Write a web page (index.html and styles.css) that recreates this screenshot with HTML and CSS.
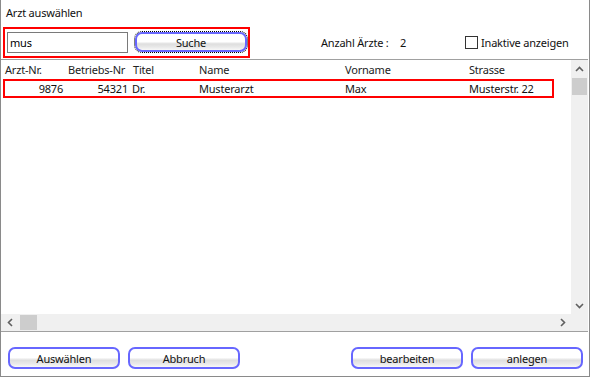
FILE: index.html
```html
<!DOCTYPE html>
<html lang="de">
<head>
    <meta charset="UTF-8">
    <title>Arzt auswählen</title>
    <link rel="stylesheet" href="styles.css">
</head>
<body>

    <div class="window">
        <div class="title">Arzt auswählen</div>

        <!-- Suche -->
        <div class="toolbar">
            <div class="search-box">
                <input class="search-input" type="text" value="mus">
                <button class="btn btn-focus search-btn">Suche</button>
            </div>
            <span class="count-label">Anzahl Ärzte :</span>
            <span class="count-value">2</span>
            <label class="inactive"><span class="check"></span>Inaktive anzeigen</label>
        </div>

        <!-- Liste -->
        <div class="list">
            <div class="list-body">
                <div class="list-head">
                    <span class="first">Arzt-Nr.</span>
                    <span>Betriebs-Nr</span>
                    <span>Titel</span>
                    <span>Name</span>
                    <span>Vorname</span>
                    <span>Strasse</span>
                </div>
                <div class="list-row selected">
                    <span class="num">9876</span>
                    <span class="num">54321</span>
                    <span>Dr.</span>
                    <span class="wide">Musterarzt</span>
                    <span class="wide">Max</span>
                    <span class="wide">Musterstr. 22</span>
                </div>
            </div>

            <div class="vscroll">
                <div class="arrow">
                    <svg width="9" height="6" viewBox="0 0 9 6"><polyline points="1,5 4.5,1.5 8,5" fill="none" stroke="#606060" stroke-width="1.6"/></svg>
                </div>
                <div class="thumb"></div>
                <div class="track"></div>
                <div class="arrow">
                    <svg width="9" height="6" viewBox="0 0 9 6"><polyline points="1,1 4.5,4.5 8,1" fill="none" stroke="#606060" stroke-width="1.6"/></svg>
                </div>
            </div>

            <div class="hscroll">
                <div class="arrow">
                    <svg width="6" height="9" viewBox="0 0 6 9"><polyline points="5,1 1.5,4.5 5,8" fill="none" stroke="#606060" stroke-width="1.6"/></svg>
                </div>
                <div class="thumb"></div>
                <div class="track"></div>
                <div class="arrow">
                    <svg width="6" height="9" viewBox="0 0 6 9"><polyline points="1,1 4.5,4.5 1,8" fill="none" stroke="#606060" stroke-width="1.6"/></svg>
                </div>
            </div>

            <div class="corner"></div>
        </div>

        <!-- Buttons -->
        <div class="footer">
            <button class="btn">Auswählen</button>
            <button class="btn">Abbruch</button>
            <span class="spacer"></span>
            <button class="btn">bearbeiten</button>
            <button class="btn">anlegen</button>
        </div>
    </div>

</body>
</html>
```

FILE: styles.css
```css
* {
    margin: 0;
    padding: 0;
    box-sizing: border-box;
}

body {
    font-family: "Noto Sans", "DejaVu Sans", sans-serif;
    font-size: 11px;
    letter-spacing: -0.2px;
    color: #111;
    background: #fff;
}

.window {
    width: 590px;
    height: 377px;
    display: flex;
    flex-direction: column;
    border: 1px solid #8a8a8a;
    border-top: none;
    background: #fff;
}

.title {
    height: 27px;
    line-height: 26px;
    padding-left: 5px;
}

/* toolbar */

.toolbar {
    height: 31px;
    display: flex;
    align-items: center;
    padding-left: 2px;
}

.search-box {
    width: 247px;
    height: 31px;
    display: flex;
    align-items: center;
    gap: 7px;
    padding-left: 2px;
    border: 2px solid #ff0000;
}

.search-input {
    width: 121px;
    height: 21px;
    padding: 0 2px;
    border: 1px solid #7a7a7a;
    font: inherit;
    letter-spacing: inherit;
    color: #000;
    outline: none;
}

.search-btn {
    width: 112px;
    height: 20px;
    margin-top: -1px;
}

.count-label {
    margin-left: 71px;
    width: 79px;
    white-space: pre;
}

.count-value {
    width: 65px;
}

.inactive {
    display: flex;
    align-items: center;
    gap: 3px;
}

.check {
    width: 13px;
    height: 13px;
    border: 1px solid #333;
    background: #fff;
}

/* buttons */

.btn {
    font: inherit;
    letter-spacing: inherit;
    color: #111;
    border: 2px solid #6767ff;
    border-radius: 7px;
    background: linear-gradient(to bottom, #ffffff 0%, #ffffff 48%, #dedede 62%, #e9e9e9 82%, #f8f8f8 100%);
    cursor: pointer;
}

.btn-focus {
    outline: 1px dotted #000;
    outline-offset: 0;
}

/* list */

.list {
    margin-top: 1px;
    margin-right: 1px;
    height: 273px;
    display: grid;
    grid-template-columns: 1fr 17px;
    grid-template-rows: 1fr 17px;
    border-top: 1px solid #a0a0a0;
    border-bottom: 1px solid #a0a0a0;
}

.list-body {
    padding-left: 2px;
    overflow: hidden;
}

.list-head, .list-row {
    width: 551px;
    display: grid;
    grid-template-columns: 63px 65px 66px 146px 124px 1fr;
    align-items: center;
    white-space: nowrap;
}

.list-head {
    height: 19px;
    color: #222;
}

.list-head span {
    padding-left: 2px;
}

.list-row {
    height: 19px;
}

.list-row span {
    padding-left: 1px;
}

.list-row .wide {
    padding-left: 2px;
}

.list-row .num {
    text-align: right;
    padding-right: 3px;
}

.list-row.selected {
    box-shadow: inset 0 0 0 2px #ff0000;
}

.vscroll, .hscroll, .corner {
    background: #f0f0f0;
}

.vscroll {
    display: flex;
    flex-direction: column;
}

.vscroll .arrow {
    height: 17px;
    display: flex;
    align-items: center;
    justify-content: center;
}

.vscroll .thumb {
    height: 17px;
    margin: 1px 1px 0;
    background: #cdcdcd;
}

.vscroll .track, .hscroll .track {
    flex: 1;
}

.hscroll {
    display: flex;
}

.hscroll .arrow {
    width: 17px;
    display: flex;
    align-items: center;
    justify-content: center;
}

.hscroll .thumb {
    width: 17px;
    margin: 1px 0 1px 2px;
    background: #cdcdcd;
}

/* footer */

.footer {
    flex: 1;
    display: flex;
    gap: 8px;
    padding: 15px 6px 0 7px;
}

.footer .btn {
    width: 112px;
    height: 22px;
}

.spacer {
    flex: 1;
}
```
